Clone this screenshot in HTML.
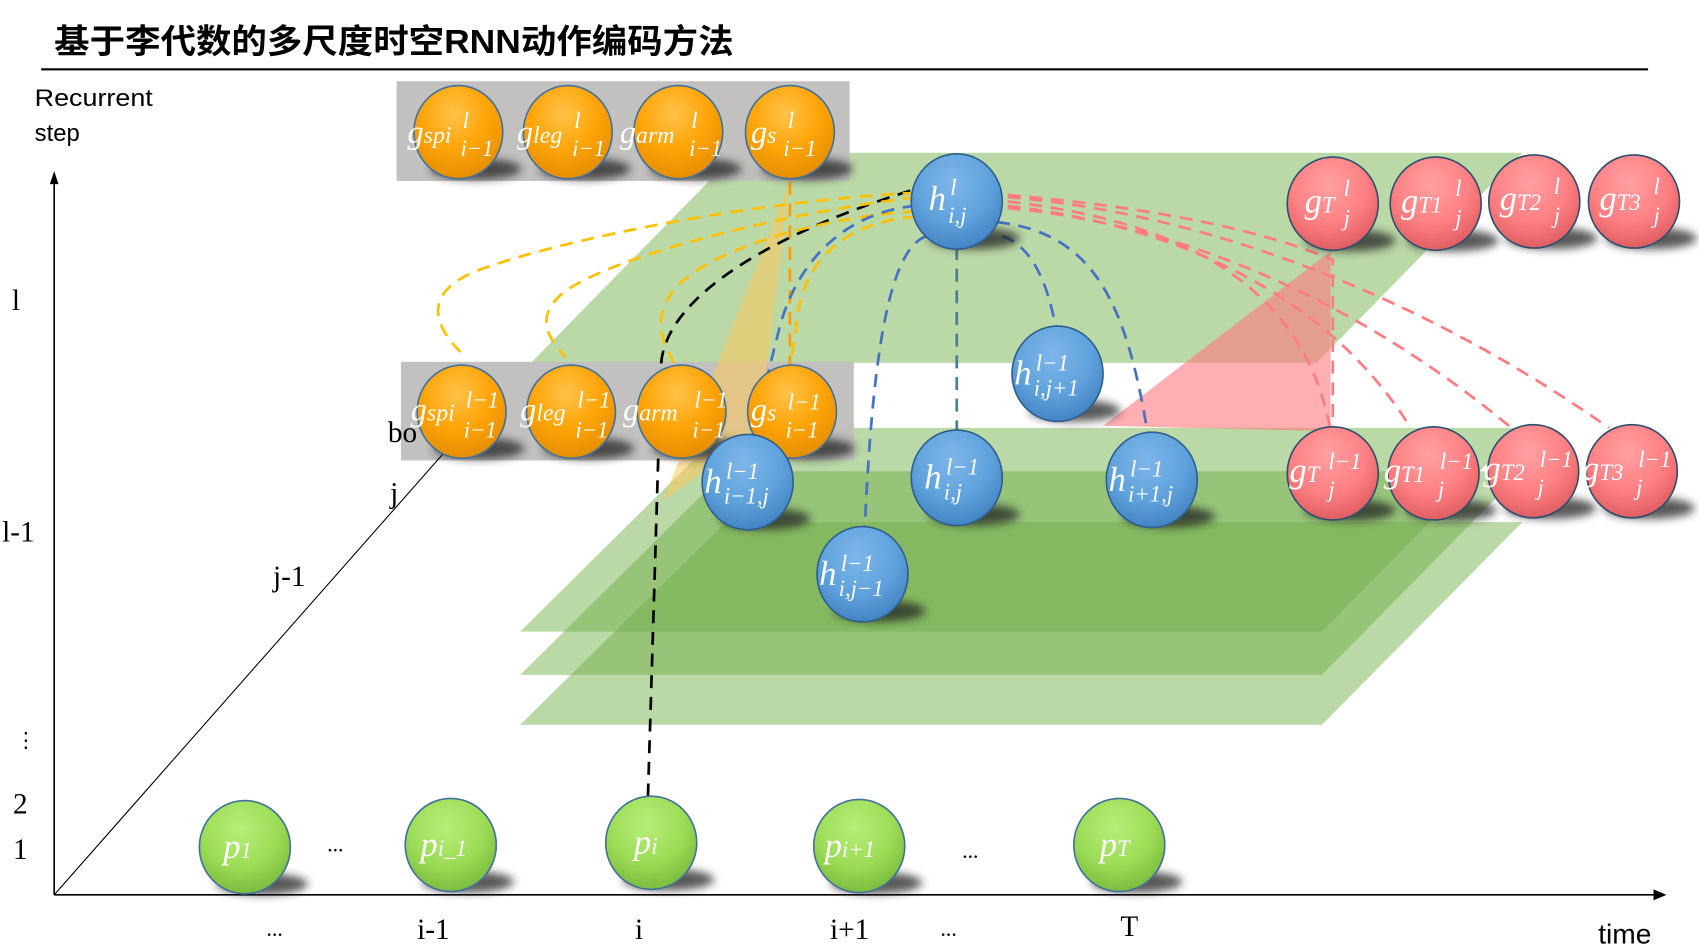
<!DOCTYPE html>
<html><head><meta charset="utf-8"><style>
html,body{margin:0;padding:0;background:#fff;width:1699px;height:949px;overflow:hidden}
svg{display:block}
.m{font-family:"Liberation Serif",serif;font-style:italic;fill:#fff}
.lab{font-family:"Liberation Serif",serif;fill:#000}
</style></head><body>
<svg width="1699" height="949" viewBox="0 0 1568 876" preserveAspectRatio="none" xmlns="http://www.w3.org/2000/svg">
<defs>
<radialGradient id="go" cx="0.45" cy="0.3" r="0.75"><stop offset="0" stop-color="#ffc24a"/><stop offset="0.5" stop-color="#ffa508"/><stop offset="1" stop-color="#e08a00"/></radialGradient>
<radialGradient id="gb" cx="0.45" cy="0.3" r="0.75"><stop offset="0" stop-color="#7fb6ea"/><stop offset="0.55" stop-color="#5fa2dc"/><stop offset="1" stop-color="#3f7fbf"/></radialGradient>
<radialGradient id="gr" cx="0.45" cy="0.3" r="0.75"><stop offset="0" stop-color="#ffa0a3"/><stop offset="0.55" stop-color="#ff8083"/><stop offset="1" stop-color="#d9585c"/></radialGradient>
<radialGradient id="gg" cx="0.45" cy="0.3" r="0.75"><stop offset="0" stop-color="#b8ee7a"/><stop offset="0.55" stop-color="#9cdc56"/><stop offset="1" stop-color="#76b63a"/></radialGradient>
<filter id="bl" x="-50%" y="-50%" width="200%" height="200%"><feGaussianBlur stdDeviation="4"/></filter>
<g id="sh"><ellipse cx="16" cy="34" rx="42" ry="10" fill="#222" opacity="0.75" filter="url(#bl)"/></g>
</defs>

<!-- title -->
<text x="50" y="49" font-family="'Liberation Sans','Noto Sans CJK SC',sans-serif" font-size="31" font-weight="bold" fill="#000" textLength="627" lengthAdjust="spacingAndGlyphs">基于李代数的多尺度时空RNN动作编码方法</text>
<rect x="38" y="63" width="1483" height="2" fill="#000"/>

<text x="32" y="98" font-family="'Liberation Sans',sans-serif" font-size="22" textLength="109" lengthAdjust="spacingAndGlyphs">Recurrent</text>
<text x="32" y="130" font-family="'Liberation Sans',sans-serif" font-size="22">step</text>

<!-- planes -->
<polygon points="490,335 680,141 1405,141 1215,335" fill="rgba(112,173,71,0.48)"/>
<polygon points="480,583 670,395 1405,395 1220,583" fill="rgba(112,173,71,0.48)"/>
<polygon points="480,623 670,435 1405,435 1220,623" fill="rgba(112,173,71,0.48)"/>
<polygon points="480,669 670,482 1405,482 1220,669" fill="rgba(112,173,71,0.48)"/>

<!-- gray boxes -->
<rect x="366" y="75" width="418" height="92" fill="#bfbebd" opacity="0.95"/>
<rect x="370" y="334" width="418" height="91" fill="#bfbebd" opacity="0.95"/>

<!-- triangles -->
<polygon points="1018,393 1228,232 1228,398" fill="rgba(255,120,125,0.6)"/>
<polygon points="729,168 612,462 700,400" fill="rgba(255,200,90,0.55)"/>

<!-- axes -->
<line x1="50" y1="826" x2="50" y2="165" stroke="#000" stroke-width="1.5"/>
<polygon points="50,158 46,170 54,170" fill="#000"/>
<line x1="50" y1="826" x2="1530" y2="826" stroke="#000" stroke-width="1.5"/>
<polygon points="1538,826 1526,821 1526,831" fill="#000"/>
<line x1="50" y1="826" x2="430" y2="395" stroke="#000" stroke-width="1"/>

<g class="lab" font-size="27">
<text x="11" y="286">l</text>
<text x="2" y="500">l-1</text>
<text x="14" y="690" font-size="20">⋮</text>
<text x="12" y="751">2</text>
<text x="12" y="793">1</text>
<text x="358" y="408">bo</text>
<text x="360" y="464">j</text>
<text x="252" y="541">j-1</text>
<text x="246" y="864" font-size="20">...</text>
<text x="385" y="867">i-1</text>
<text x="586" y="867">i</text>
<text x="766" y="867">i+1</text>
<text x="868" y="864" font-size="20">...</text>
<text x="1034" y="864">T</text>
<text x="302" y="786" font-size="20">...</text>
<text x="888" y="792" font-size="20">...</text>
</g>
<text x="1475" y="871" font-family="'Liberation Sans',sans-serif" font-size="26">time</text>

<!-- dashed connections -->
<g fill="none" stroke-width="2.5" stroke-dasharray="12,8">
<path d="M840,176 C700,220 610,280 610,340 L598,735" stroke="#000"/>
<path d="M845,178 C700,185 520,220 440,250 C390,270 400,300 425,325" stroke="#ffc000"/>
<path d="M845,182 C700,200 560,240 520,270 C490,295 510,315 522,330" stroke="#ffc000"/>
<path d="M845,195 C760,200 650,230 620,270 C600,300 615,320 622,335" stroke="#ffc000"/>
<path d="M845,200 C780,205 740,240 735,300 L730,335" stroke="#ffc000"/>
<path d="M729,168 L729,338" stroke="#ff9d00"/>
<path d="M845,190 C790,195 740,230 720,300 L700,380" stroke="#4472c4"/>
<path d="M855,218 C820,230 805,330 798,490" stroke="#4472c4"/>
<path d="M883,228 L883,400" stroke="#4a7f8f"/>
<path d="M925,218 C960,230 970,280 975,305" stroke="#4472c4"/>
<path d="M920,205 C1010,215 1040,280 1060,405" stroke="#4472c4"/>
<path d="M930,180 C1050,190 1160,210 1230,240 L1230,400" stroke="#ff7c80"/>
<path d="M930,186 C1050,200 1200,240 1228,398" stroke="#ff7c80"/>
<path d="M930,190 C1100,210 1230,280 1302,395" stroke="#ff7c80"/>
<path d="M930,192 C1120,210 1280,300 1395,395" stroke="#ff7c80"/>
<path d="M930,182 C1150,200 1350,300 1485,395" stroke="#ff7c80"/>
</g>

<!-- orange top -->
<g transform="translate(423,122)"><use href="#sh"/><ellipse rx="41" ry="43" fill="url(#go)" stroke="#41719c" stroke-width="1.5"/>
<text class="m" x="-47" y="10" font-size="30">g<tspan font-size="22">spi</tspan></text><text class="m" x="4" y="-4" font-size="21">l</text><text class="m" x="2" y="22" font-size="21">i−1</text></g>
<g transform="translate(524,122)"><use href="#sh"/><ellipse rx="41" ry="43" fill="url(#go)" stroke="#41719c" stroke-width="1.5"/>
<text class="m" x="-47" y="10" font-size="30">g<tspan font-size="22">leg</tspan></text><text class="m" x="6" y="-4" font-size="21">l</text><text class="m" x="4" y="22" font-size="21">i−1</text></g>
<g transform="translate(626,122)"><use href="#sh"/><ellipse rx="41" ry="43" fill="url(#go)" stroke="#41719c" stroke-width="1.5"/>
<text class="m" x="-54" y="10" font-size="30">g<tspan font-size="22">arm</tspan></text><text class="m" x="12" y="-4" font-size="21">l</text><text class="m" x="10" y="22" font-size="21">i−1</text></g>
<g transform="translate(729,122)"><use href="#sh"/><ellipse rx="41" ry="43" fill="url(#go)" stroke="#41719c" stroke-width="1.5"/>
<text class="m" x="-36" y="10" font-size="30">g<tspan font-size="22">s</tspan></text><text class="m" x="-2" y="-4" font-size="21">l</text><text class="m" x="-6" y="22" font-size="21">i−1</text></g>

<!-- orange mid -->
<g transform="translate(426,380)"><use href="#sh"/><ellipse rx="41" ry="43" fill="url(#go)" stroke="#41719c" stroke-width="1.5"/>
<text class="m" x="-47" y="8" font-size="30">g<tspan font-size="22">spi</tspan></text><text class="m" x="4" y="-4" font-size="21">l−1</text><text class="m" x="2" y="24" font-size="21">i−1</text></g>
<g transform="translate(527,380)"><use href="#sh"/><ellipse rx="41" ry="43" fill="url(#go)" stroke="#41719c" stroke-width="1.5"/>
<text class="m" x="-47" y="8" font-size="30">g<tspan font-size="22">leg</tspan></text><text class="m" x="6" y="-4" font-size="21">l−1</text><text class="m" x="4" y="24" font-size="21">i−1</text></g>
<g transform="translate(629,380)"><use href="#sh"/><ellipse rx="41" ry="43" fill="url(#go)" stroke="#41719c" stroke-width="1.5"/>
<text class="m" x="-54" y="8" font-size="30">g<tspan font-size="22">arm</tspan></text><text class="m" x="12" y="-4" font-size="21">l−1</text><text class="m" x="10" y="24" font-size="21">i−1</text></g>
<g transform="translate(731,380)"><use href="#sh"/><ellipse rx="41" ry="43" fill="url(#go)" stroke="#41719c" stroke-width="1.5"/>
<text class="m" x="-38" y="8" font-size="30">g<tspan font-size="22">s</tspan></text><text class="m" x="-4" y="-2" font-size="21">l−1</text><text class="m" x="-6" y="24" font-size="21">i−1</text></g>

<!-- blue -->
<g transform="translate(883,186)"><use href="#sh"/><ellipse rx="42" ry="44" fill="url(#gb)" stroke="#2e5f8f" stroke-width="1.5"/>
<text class="m" x="-26" y="8" font-size="32">h</text><text class="m" x="-6" y="-6" font-size="21">l</text><text class="m" x="-8" y="20" font-size="21">i,j</text></g>
<g transform="translate(976,345)"><use href="#sh"/><ellipse rx="42" ry="44" fill="url(#gb)" stroke="#2e5f8f" stroke-width="1.5"/>
<text class="m" x="-40" y="10" font-size="32">h</text><text class="m" x="-20" y="-3" font-size="21">l−1</text><text class="m" x="-22" y="20" font-size="21">i,j+1</text></g>
<g transform="translate(690,445)"><use href="#sh"/><ellipse rx="42" ry="44" fill="url(#gb)" stroke="#2e5f8f" stroke-width="1.5"/>
<text class="m" x="-40" y="10" font-size="32">h</text><text class="m" x="-20" y="-3" font-size="21">l−1</text><text class="m" x="-22" y="20" font-size="21">i−1,j</text></g>
<g transform="translate(883,441)"><use href="#sh"/><ellipse rx="42" ry="44" fill="url(#gb)" stroke="#2e5f8f" stroke-width="1.5"/>
<text class="m" x="-30" y="10" font-size="32">h</text><text class="m" x="-10" y="-3" font-size="21">l−1</text><text class="m" x="-12" y="20" font-size="21">i,j</text></g>
<g transform="translate(1063,443)"><use href="#sh"/><ellipse rx="42" ry="44" fill="url(#gb)" stroke="#2e5f8f" stroke-width="1.5"/>
<text class="m" x="-40" y="10" font-size="32">h</text><text class="m" x="-20" y="-3" font-size="21">l−1</text><text class="m" x="-22" y="20" font-size="21">i+1,j</text></g>
<g transform="translate(796,530)"><use href="#sh"/><ellipse rx="42" ry="44" fill="url(#gb)" stroke="#2e5f8f" stroke-width="1.5"/>
<text class="m" x="-40" y="10" font-size="32">h</text><text class="m" x="-20" y="-3" font-size="21">l−1</text><text class="m" x="-22" y="20" font-size="21">i,j−1</text></g>

<!-- red top -->
<g transform="translate(1230,188)"><use href="#sh"/><ellipse rx="42" ry="43" fill="url(#gr)" stroke="#2e4f6f" stroke-width="1.5"/>
<text class="m" x="-26" y="8" font-size="32">g<tspan font-size="21">T</tspan></text><text class="m" x="10" y="-7" font-size="21">l</text><text class="m" x="10" y="20" font-size="21">j</text></g>
<g transform="translate(1325,188)"><use href="#sh"/><ellipse rx="42" ry="43" fill="url(#gr)" stroke="#2e4f6f" stroke-width="1.5"/>
<text class="m" x="-32" y="8" font-size="32">g<tspan font-size="21">T1</tspan></text><text class="m" x="18" y="-7" font-size="21">l</text><text class="m" x="18" y="20" font-size="21">j</text></g>
<g transform="translate(1416,186)"><use href="#sh"/><ellipse rx="42" ry="43" fill="url(#gr)" stroke="#2e4f6f" stroke-width="1.5"/>
<text class="m" x="-32" y="8" font-size="32">g<tspan font-size="21">T2</tspan></text><text class="m" x="18" y="-7" font-size="21">l</text><text class="m" x="18" y="20" font-size="21">j</text></g>
<g transform="translate(1508,186)"><use href="#sh"/><ellipse rx="42" ry="43" fill="url(#gr)" stroke="#2e4f6f" stroke-width="1.5"/>
<text class="m" x="-32" y="8" font-size="32">g<tspan font-size="21">T3</tspan></text><text class="m" x="18" y="-7" font-size="21">l</text><text class="m" x="18" y="20" font-size="21">j</text></g>

<!-- red bottom -->
<g transform="translate(1230,437)"><use href="#sh"/><ellipse rx="42" ry="43" fill="url(#gr)" stroke="#2e4f6f" stroke-width="1.5"/>
<text class="m" x="-40" y="8" font-size="32">g<tspan font-size="21">T</tspan></text><text class="m" x="-4" y="-4" font-size="21">l−1</text><text class="m" x="-4" y="22" font-size="21">j</text></g>
<g transform="translate(1323,437)"><use href="#sh"/><ellipse rx="42" ry="43" fill="url(#gr)" stroke="#2e4f6f" stroke-width="1.5"/>
<text class="m" x="-46" y="8" font-size="32">g<tspan font-size="21">T1</tspan></text><text class="m" x="6" y="-4" font-size="21">l−1</text><text class="m" x="4" y="22" font-size="21">j</text></g>
<g transform="translate(1415,435)"><use href="#sh"/><ellipse rx="42" ry="43" fill="url(#gr)" stroke="#2e4f6f" stroke-width="1.5"/>
<text class="m" x="-46" y="8" font-size="32">g<tspan font-size="21">T2</tspan></text><text class="m" x="6" y="-4" font-size="21">l−1</text><text class="m" x="4" y="22" font-size="21">j</text></g>
<g transform="translate(1506,435)"><use href="#sh"/><ellipse rx="42" ry="43" fill="url(#gr)" stroke="#2e4f6f" stroke-width="1.5"/>
<text class="m" x="-46" y="8" font-size="32">g<tspan font-size="21">T3</tspan></text><text class="m" x="6" y="-4" font-size="21">l−1</text><text class="m" x="4" y="22" font-size="21">j</text></g>

<!-- green p nodes -->
<g transform="translate(226,782)"><use href="#sh"/><ellipse rx="42" ry="43" fill="url(#gg)" stroke="#41719c" stroke-width="1.5"/>
<text class="m" x="-20" y="10" font-size="32">p<tspan font-size="21">1</tspan></text></g>
<g transform="translate(416,780)"><use href="#sh"/><ellipse rx="42" ry="43" fill="url(#gg)" stroke="#41719c" stroke-width="1.5"/>
<text class="m" x="-28" y="10" font-size="32">p<tspan font-size="21">i_1</tspan></text></g>
<g transform="translate(601,778)"><use href="#sh"/><ellipse rx="42" ry="43" fill="url(#gg)" stroke="#41719c" stroke-width="1.5"/>
<text class="m" x="-16" y="10" font-size="32">p<tspan font-size="21">i</tspan></text></g>
<g transform="translate(793,781)"><use href="#sh"/><ellipse rx="42" ry="43" fill="url(#gg)" stroke="#41719c" stroke-width="1.5"/>
<text class="m" x="-32" y="10" font-size="32">p<tspan font-size="21">i+1</tspan></text></g>
<g transform="translate(1033,780)"><use href="#sh"/><ellipse rx="42" ry="43" fill="url(#gg)" stroke="#41719c" stroke-width="1.5"/>
<text class="m" x="-18" y="10" font-size="32">p<tspan font-size="21">T</tspan></text></g>
</svg>
</body></html>
